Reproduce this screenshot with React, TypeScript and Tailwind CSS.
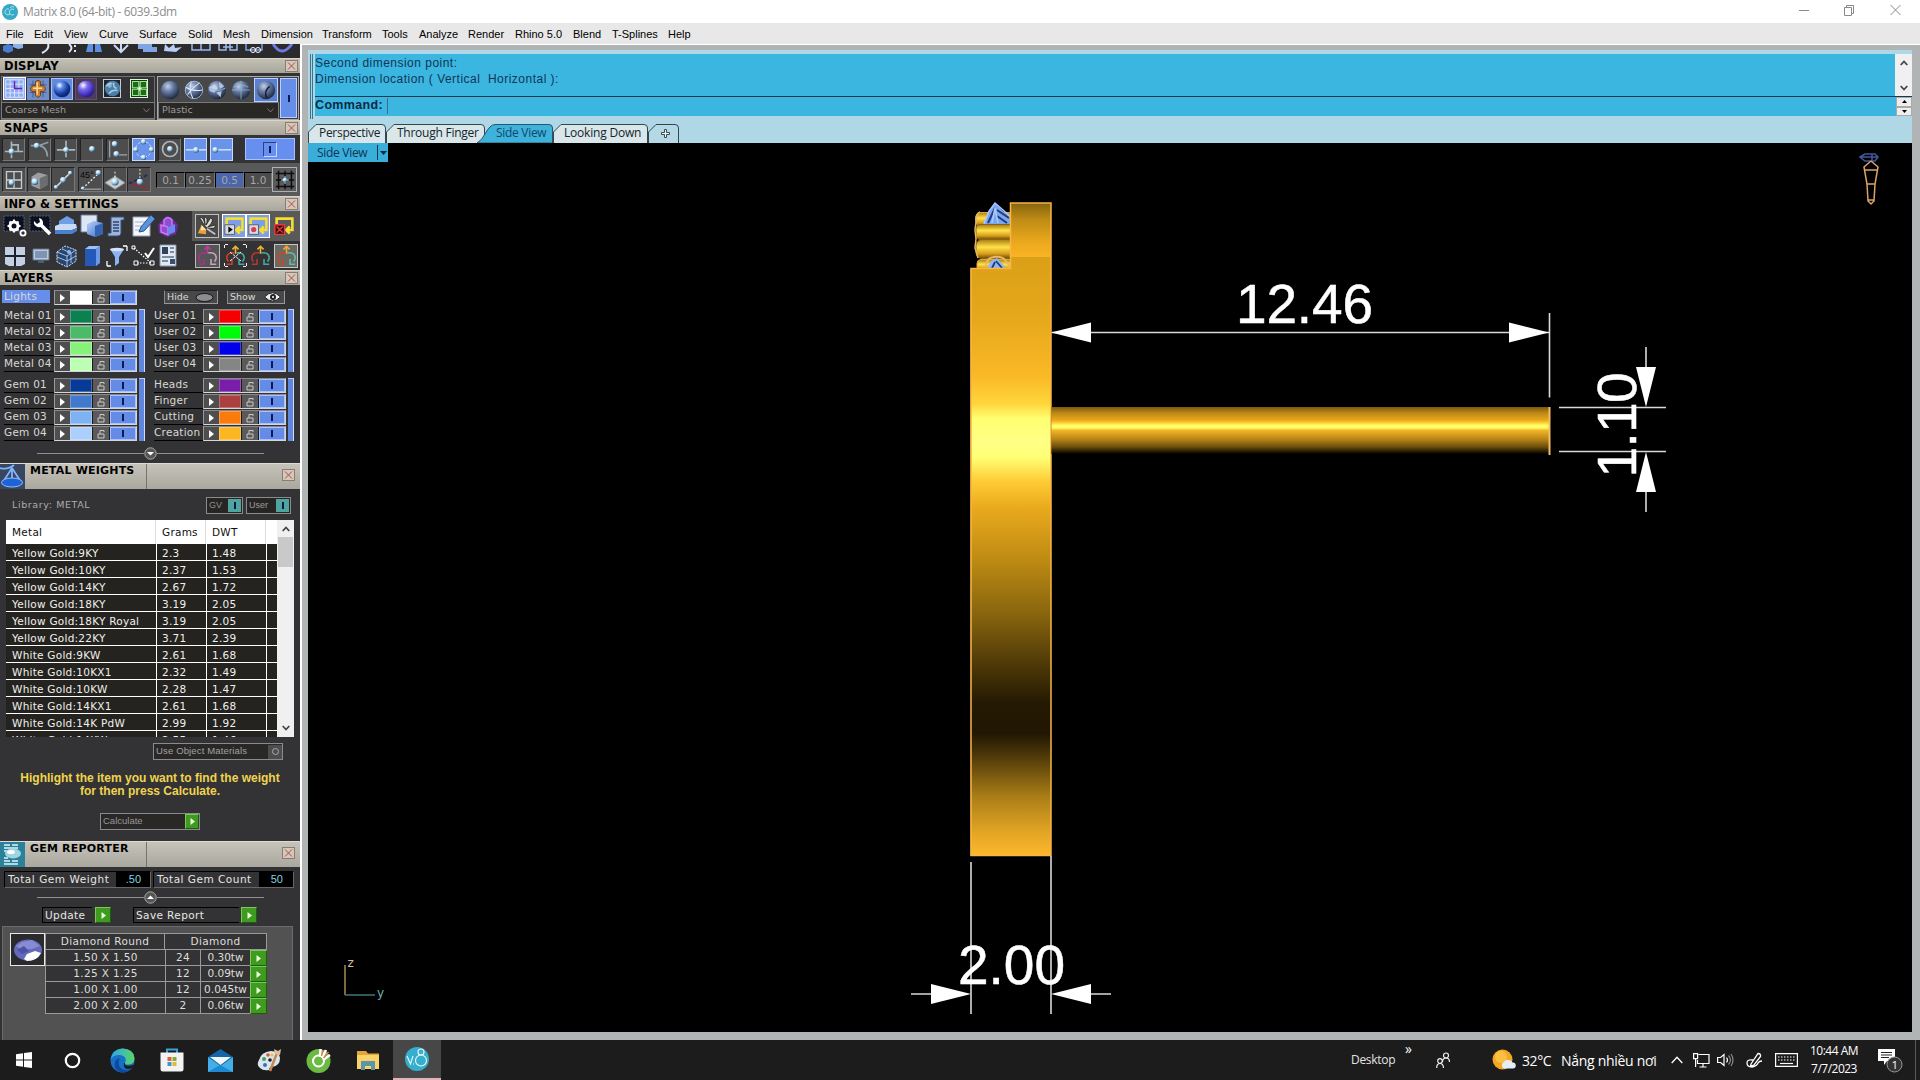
import React from "react";

const VERDANA = "font-['DejaVu_Sans',sans-serif]";
const ARIAL = "font-['Liberation_Sans',sans-serif]";
const SEGOE = "font-['Open_Sans',sans-serif]";

const menuItems = [
  { label: "File", width: "w-[28px]" },
  { label: "Edit", width: "w-[30px]" },
  { label: "View", width: "w-[35px]" },
  { label: "Curve", width: "w-[40px]" },
  { label: "Surface", width: "w-[49px]" },
  { label: "Solid", width: "w-[35px]" },
  { label: "Mesh", width: "w-[38px]" },
  { label: "Dimension", width: "w-[61px]" },
  { label: "Transform", width: "w-[60px]" },
  { label: "Tools", width: "w-[37px]" },
  { label: "Analyze", width: "w-[49px]" },
  { label: "Render", width: "w-[47px]" },
  { label: "Rhino 5.0", width: "w-[58px]" },
  { label: "Blend", width: "w-[39px]" },
  { label: "T-Splines", width: "w-[56px]" },
  { label: "Help", width: "w-[30px]" },
];

const metalLayers = [
  { name: "Metal 01", color: "bg-[#0b8050]" },
  { name: "Metal 02", color: "bg-[#4cba68]" },
  { name: "Metal 03", color: "bg-[#86f27a]" },
  { name: "Metal 04", color: "bg-[#bcffb4]" },
];
const userLayers = [
  { name: "User 01", color: "bg-[#f50000]" },
  { name: "User 02", color: "bg-[#00fb0a]" },
  { name: "User 03", color: "bg-[#0000ea]" },
  { name: "User 04", color: "bg-[#858585]" },
];
const gemLayers = [
  { name: "Gem 01", color: "bg-[#073a96]" },
  { name: "Gem 02", color: "bg-[#4379cd]" },
  { name: "Gem 03", color: "bg-[#7fb2f3]" },
  { name: "Gem 04", color: "bg-[#adcffd]" },
];
const partLayers = [
  { name: "Heads", color: "bg-[#791ea8]" },
  { name: "Finger", color: "bg-[#aa4140]" },
  { name: "Cutting", color: "bg-[#fb7a0c]" },
  { name: "Creation", color: "bg-[#fbb622]" },
];

const metals = [
  ["Yellow Gold:9KY", "2.3", "1.48"],
  ["Yellow Gold:10KY", "2.37", "1.53"],
  ["Yellow Gold:14KY", "2.67", "1.72"],
  ["Yellow Gold:18KY", "3.19", "2.05"],
  ["Yellow Gold:18KY Royal", "3.19", "2.05"],
  ["Yellow Gold:22KY", "3.71", "2.39"],
  ["White Gold:9KW", "2.61", "1.68"],
  ["White Gold:10KX1", "2.32", "1.49"],
  ["White Gold:10KW", "2.28", "1.47"],
  ["White Gold:14KX1", "2.61", "1.68"],
  ["White Gold:14K PdW", "2.99", "1.92"],
  ["White Gold:14KW", "2.55", "1.46"],
];

const gems = [
  ["1.50 X 1.50", "24", "0.30tw"],
  ["1.25 X 1.25", "12", "0.09tw"],
  ["1.00 X 1.00", "12", "0.045tw"],
  ["2.00 X 2.00", "2", "0.06tw"],
];

type IconProps = { children: React.ReactNode; className?: string; size?: number };

const Icon = ({ children, className = "", size = 24 }: IconProps) => (
  <svg width={size} height={size} viewBox="0 0 24 24" fill="none" className={`shrink-0 ${className}`}>
    {children}
  </svg>
);

const Gradients = () => (
  <svg width="0" height="0" className="absolute">
    <defs>
      <radialGradient id="blueBall" cx="35%" cy="28%" r="75%">
        <stop offset="0" stopColor="#ffffff" />
        <stop offset=".28" stopColor="#5c8be8" />
        <stop offset=".7" stopColor="#153a9c" />
        <stop offset="1" stopColor="#0a1e5c" />
      </radialGradient>
      <radialGradient id="violetBall" cx="33%" cy="28%" r="75%">
        <stop offset="0" stopColor="#ffffff" />
        <stop offset=".35" stopColor="#7a6af0" />
        <stop offset="1" stopColor="#26149a" />
      </radialGradient>
      <radialGradient id="steelBall" cx="38%" cy="30%" r="72%">
        <stop offset="0" stopColor="#c3d0ea" />
        <stop offset=".4" stopColor="#6b7fa8" />
        <stop offset="1" stopColor="#1c273f" />
      </radialGradient>
      <radialGradient id="dot" cx="35%" cy="30%" r="75%">
        <stop offset="0" stopColor="#ffffff" />
        <stop offset=".5" stopColor="#a8d4f0" />
        <stop offset="1" stopColor="#27506f" />
      </radialGradient>
      <linearGradient id="blueFace" x1="0" y1="0" x2="1" y2="1">
        <stop offset="0" stopColor="#b8d2ff" />
        <stop offset="1" stopColor="#3b6bbd" />
      </linearGradient>
    </defs>
  </svg>
);

const Dot = ({ x, y, r = 2.6 }: { x: number; y: number; r?: number }) => (
  <circle cx={x} cy={y} r={r} fill="url(#dot)" />
);

const CloseBox = () => (
  <div className="flex h-3 w-[13px] items-center justify-center border border-[#8b7c72] bg-[#d2c8bc]">
    <svg width="9" height="8" viewBox="0 0 9 8" stroke="#b04a42" strokeWidth="1">
      <path d="M1 .5l7 7M8 .5l-7 7" />
    </svg>
  </div>
);

const PanelHeader = ({ title }: { title: string }) => (
  <div className="flex h-[15px] shrink-0 items-center justify-between border-t border-[#d8d4c8] bg-linear-to-b from-[#c3bfb3] to-[#a9a69c] pr-[2px] pl-[4px]">
    <span className={`${VERDANA} text-[11.5px] leading-[14px] font-bold tracking-[0.1px] text-black`}>{title}</span>
    <CloseBox />
  </div>
);

const ReportHeader = ({ title, icon }: { title: string; icon: React.ReactNode }) => (
  <div className="flex h-[26px] shrink-0 border-t border-[#dedbd2] bg-linear-to-b from-[#c6c3ba] to-[#aaa79e]">
    {icon}
    <div className={`${VERDANA} w-[122px] border-r border-[#77746c] pl-[5px] text-[11px] leading-[13px] font-bold tracking-[0.2px] whitespace-nowrap text-black`}>
      {title}
    </div>
    <div className="flex flex-1 items-center justify-end pr-[5px] pb-[3px]">
      <CloseBox />
    </div>
  </div>
);

const ToggleMark = () => <span className="h-[7px] w-[2px] bg-[#0c1a52]" />;

type BtnProps = { children: React.ReactNode; active?: boolean; className?: string };

const SnapButton = ({ children, active = false, className = "" }: BtnProps) => (
  <div
    className={`flex h-[23px] w-[23px] shrink-0 items-center justify-center border ${
      active ? "border-[#c5d8ff] bg-[#6a93ea]" : "border-t-[#222] border-r-[#777] border-b-[#777] border-l-[#222] bg-[#4d4d4d]"
    } ${className}`}
  >
    {children}
  </div>
);

/* top strip, scrolled so only the lower part of the icons shows */
const ToolStrip = () => (
  <div className="flex h-[14px] shrink-0 items-start overflow-hidden bg-[#2b2b2d] pl-[1px]">
    <svg width="296" height="10" viewBox="0 0 296 10" fill="none">
      <path d="M2 2l5-2 5 2v5l-5 2-5-2z" fill="#4a7cd0" />
      <path d="M12 0h10v4l-5 1-5-2z" fill="#8eb0e8" />
      <path d="M47 0q2 5-6 9" stroke="#dfe6f5" strokeWidth="2" />
      <path d="M68 0q5 4 0 8M74 1v2M74 6v2" stroke="#dfe6f5" strokeWidth="2" />
      <path d="M85 8l2-8h5v8zM94 0h5l2 8h-7z" fill="#5f8fe0" />
      <path d="M120 0v7M113 1l7 7 7-7" stroke="#c9d8f5" strokeWidth="2" />
      <path d="M137 0h14v3h5v5h-14v-3h-5z" fill="#7fa4e4" />
      <path d="M163 7l1-7 4 4 5-4 1 4 7-1-6 5z" fill="#b8cdf2" />
      <path d="M191 0v6h18v-6M200 0v6" stroke="#9ab7ee" strokeWidth="1.5" />
      <path d="M218 0v6h7v-6M229 0v6h7v-6M222 3h10" stroke="#9ab7ee" strokeWidth="1.5" />
      <path d="M245 0v6h16v-6" stroke="#7f9fdc" strokeWidth="1.5" />
      <circle cx="252" cy="6" r="2.5" stroke="#fff" />
      <circle cx="257" cy="6" r="2.5" stroke="#fff" />
      <path d="M272 0q9 14 19 0" stroke="#6f78e0" strokeWidth="3" />
    </svg>
  </div>
);

const Combo = ({ label, className }: { label: string; className: string }) => (
  <div className={`flex h-[17px] items-center justify-between border border-[#77797a] bg-[#2a2825] pr-[4px] pl-[3px] ${className}`}>
    <span className={`${VERDANA} text-[9.5px] text-[#9d9d9d]`}>{label}</span>
    <svg width="7" height="5" viewBox="0 0 7 5" fill="none" stroke="#77797a">
      <path d="M.5.5l3 3.5 3-3.5" />
    </svg>
  </div>
);

const Ball = ({ kind = 0 }: { kind?: number }) => (
  <Icon size={22}>
    <circle cx="12" cy="12" r="10" fill="url(#steelBall)" />
    {kind === 1 && <path d="M3 9q8 5 18 3M9 2.500q-3 10 2 19M18 4q-8 6-13 13" stroke="#dfe9fb" strokeWidth="1.100" />}
    {kind === 1 && <circle cx="12" cy="12" r="9.500" stroke="#aebbd3" />}
    {kind === 2 && (
      <>
        <path d="M3 9l6-3 4 4-4 5-5-2zM14 3l6 5-5 3zM11 15l6-2-1 7z" fill="#c9dcf4" opacity=".8" />
        <path d="M3 10q9 5 18 0" stroke="#9db2d2" />
      </>
    )}
    {kind === 3 && <path d="M2 12h20M12 2v20M4 9q8-5 16 0" stroke="#8cb4c4" strokeWidth="1.100" opacity=".8" />}
    {kind === 4 && <path d="M13 21q-4-8 3-13" stroke="#101a30" strokeWidth="1.500" />}
  </Icon>
);

const DisplayPanel = () => (
  <div className="flex h-[47px] shrink-0 justify-between bg-[#333335] px-[1px] pt-[3px]">
    <div className="flex w-[154px] flex-col border border-[#6f7072]">
      <div className="flex h-[25px] items-center pb-[2px]">
        <div className="ml-[1px] flex h-[23px] w-[23px] items-center justify-center border border-white bg-[#8eabf3]">
          <Icon size={21}>
            <path d="M2 2h20v20H2zM2 7h20M2 12h20M2 17h20M7 2v20M12 2v20M17 2v20" stroke="#e4eafc" />
            <path d="M12 3v9h9" stroke="#6a1fae" strokeWidth="1.600" />
          </Icon>
        </div>
        <div className="ml-[1px] flex h-[22px] w-[22px] items-center justify-center bg-[#6f8ecb]">
          <Icon size={20}>
            <path d="M2 7h20M2 16h20M6 2v20M18 2v20" stroke="#394f85" />
            <path d="M9 3q3-3 6 0v5q5-1 6 4-1 4-6 3v5q-3 4-6 0v-5q-5 1-6-3 1-5 6-4z" fill="#c9802f" stroke="#6a3506" />
            <path d="M11 4v15M6 11h11" stroke="#ffd79a" strokeWidth="1.800" />
          </Icon>
        </div>
        <div className="ml-[2px] flex h-[22px] w-[22px] items-center justify-center border border-[#a9c2ff] bg-[#6389dd]">
          <Icon size={20}><circle cx="12" cy="12" r="10" fill="url(#blueBall)" /></Icon>
        </div>
        <div className="ml-[2px] flex h-[22px] w-[22px] items-center justify-center border border-[#6b4a7b] bg-[#4a3d55]">
          <Icon size={20}><circle cx="12" cy="12" r="10" fill="url(#violetBall)" /></Icon>
        </div>
        <div className="ml-[6px] flex h-[19px] w-[18px] items-center justify-center border border-[#c9cbcd] bg-[#1a2633]">
          <Icon size={17}>
            <circle cx="12" cy="12" r="11" fill="#4d7ea6" />
            <path d="M3 9q4-6 9-4M7 19q5-6 12-4M14 4q-2 6 4 8" stroke="#a3cbe6" strokeWidth="2" />
            <circle cx="8" cy="8" r="3" fill="#b9d9ee" opacity=".6" />
          </Icon>
        </div>
        <div className="ml-[9px] flex h-[19px] w-[18px] items-center justify-center border border-[#dff0dc] bg-[#123912]">
          <Icon size={17}>
            <path d="M2 2h9v9H2zM13 2h9v9h-9zM2 13h9v9H2zM13 13h9v9h-9z" fill="#1d6a1c" stroke="#9fe892" strokeWidth="1.500" />
            <path d="M9 12h6M12 9v6" stroke="#dfffd8" strokeWidth="1.500" />
          </Icon>
        </div>
      </div>
      <Combo label="Coarse Mesh" className="-mx-px w-[154px]" />
    </div>
    <div className="flex w-[142px] border border-[#a8a9aa] bg-[#3b3b3d]">
      <div className="flex w-[121px] flex-col">
        <div className="flex h-[25px] items-center justify-around bg-[#47484a]">
          <Ball />
          <Ball kind={1} />
          <Ball kind={2} />
          <Ball kind={3} />
          <div className="border border-[#bcd0ff] bg-[#5b80d0]"><Ball kind={4} /></div>
        </div>
        <Combo label="Plastic" className="w-[121px]" />
      </div>
      <div className="m-px flex flex-1 items-center justify-center border border-[#b9ceff] bg-[#668ee8]">
        <ToggleMark />
      </div>
    </div>
  </div>
);

const SnapsPanel = () => (
  <div className="flex h-[61px] shrink-0 flex-col bg-[#333335]">
    <div className="flex h-[28px] items-center gap-[3px] pl-[2px]">
      <SnapButton>
        <Icon size={20}><path d="M1 15h22M9 3v20M9 7h8v8" stroke="#a9b6bf" strokeWidth="2" /><Dot x={9} y={15} r={3.500} /></Icon>
      </SnapButton>
      <SnapButton>
        <Icon size={20}><path d="M1 8h10q9 1 10 13M10 8l12-4" stroke="#8fa0aa" strokeWidth="2" /><Dot x={8} y={8} r={3.500} /></Icon>
      </SnapButton>
      <SnapButton>
        <Icon size={20}><path d="M1 13h22M12 2v20" stroke="#a9b6bf" strokeWidth="2" /><Dot x={12} y={13} r={3.500} /></Icon>
      </SnapButton>
      <SnapButton><Icon size={20}><Dot x={12} y={12} r={3.500} /></Icon></SnapButton>
      <SnapButton>
        <Icon size={20}><path d="M2 2v20M7 19h16" stroke="#9aa7b0" strokeWidth="1.500" /><Dot x={8} y={6} r={3.500} /><Dot x={10} y={18} r={3.500} /></Icon>
      </SnapButton>
      <SnapButton active>
        <Icon size={21}>
          <circle cx="12" cy="12" r="9" stroke="#dfe9ff" strokeDasharray="3 2" />
          <Dot x={12} y={3} r={3} /><Dot x={21} y={12} r={3} /><Dot x={12} y={21} r={3} /><Dot x={3} y={12} r={3} />
        </Icon>
      </SnapButton>
      <SnapButton>
        <Icon size={20}><circle cx="12" cy="12" r="9" stroke="#aeb6bb" strokeWidth="2" /><Dot x={12} y={12} r={3.500} /></Icon>
      </SnapButton>
      <SnapButton active><Icon size={20}><path d="M0 13h24" stroke="#e3edff" strokeWidth="1.500" /><Dot x={12} y={13} r={3.500} /></Icon></SnapButton>
      <SnapButton active><Icon size={20}><path d="M3 13h20" stroke="#e3edff" strokeWidth="1.500" /><Dot x={4} y={13} r={3.500} /></Icon></SnapButton>
      <div className="ml-[9px] flex h-[22px] w-[50px] items-center justify-center border border-[#a6c0ff] bg-[#668ff0]">
        <div className="flex h-[15px] w-[14px] items-center justify-center border border-t-[#2c4280] border-r-[#c6d7ff] border-b-[#c6d7ff] border-l-[#2c4280]">
          <ToggleMark />
        </div>
      </div>
    </div>
    <div className="flex h-[33px] items-center bg-[#58595a] pl-[2px]">
      <SnapButton className="mr-px h-[25px] w-[24px] border-[#8b8c8d]">
        <Icon size={20}><path d="M3 2h18v20H3zM12 2v20M3 12h18" stroke="#c5ccd0" strokeWidth="1.600" /><Dot x={9} y={15} r={3.500} /></Icon>
      </SnapButton>
      <SnapButton className="h-[25px] w-[24px] border-[#8b8c8d]">
        <Icon size={20}><path d="M3 8l8-5 11 3v12l-9 5-10-4z" fill="#9b9d9f" /><path d="M13 10l9-4v12l-9 5z" fill="#6b6d6f" /><Dot x={7} y={14} r={4} /></Icon>
      </SnapButton>
      <SnapButton className="h-[25px] w-[24px] border-[#8b8c8d]">
        <Icon size={20}><path d="M3 21L21 3" stroke="#d4dade" strokeWidth="2" /><Dot x={3.500} y={20.500} r={2.500} /><Dot x={12} y={12} r={3.500} /><Dot x={20.500} y={3.500} r={2.500} /></Icon>
      </SnapButton>
      <SnapButton className="ml-[3px] h-[25px] w-[25px] border-[#8b8c8d]">
        <Icon size={22}>
          <text x="0" y="10" fontSize="10" fill="#0a0a0a" fontFamily="Liberation Sans">45°</text>
          <path d="M3 21L20 5" stroke="#e9eef2" strokeDasharray="2 2" strokeWidth="1.500" /><path d="M3 22h20" stroke="#bfc6ca" /><Dot x={20} y={4} r={3} /><Dot x={3} y={21} r={2} />
        </Icon>
      </SnapButton>
      <SnapButton className="h-[25px] w-[24px] border-[#8b8c8d]">
        <Icon size={22}><path d="M1 15l11-7 11 7-11 7z" fill="#c9cdcf" stroke="#8e9294" /><path d="M12 3v10" stroke="#fff" strokeDasharray="2 2" /><Dot x={12} y={14} r={4} /></Icon>
      </SnapButton>
      <SnapButton className="h-[25px] w-[24px] border-[#8b8c8d]">
        <Icon size={22}><path d="M1 15l22 7" stroke="#9c2b34" strokeWidth="2" strokeDasharray="5 1" /><path d="M1 16L22 6" stroke="#222c5e" strokeWidth="2" strokeDasharray="4 2" /><path d="M13 0v14" stroke="#fff" strokeDasharray="2 2" /><Dot x={13} y={14} r={3.500} /></Icon>
      </SnapButton>
      <div className={`${VERDANA} ml-[5px] flex h-[16px] w-[116px] text-[10.5px] leading-[15px] text-[#a5a6a7]`}>
        <span className="w-[29px] border border-t-black border-r-[#777] border-b-[#777] border-l-black bg-[#4c4c4d] text-center">0.1</span>
        <span className="w-[30px] border border-t-black border-r-[#777] border-b-[#777] border-l-black bg-[#4c4c4d] text-center">0.25</span>
        <span className="w-[29px] border border-t-black border-r-[#777] border-b-[#777] border-l-black bg-[#4a67ad] text-center">0.5</span>
        <span className="w-[28px] border border-t-black border-r-[#777] border-b-[#777] border-l-black bg-[#4c4c4d] text-center">1.0</span>
      </div>
      <div className="flex h-[25px] w-[25px] shrink-0 items-center justify-center border border-[#b0b1b2] bg-[#5a5a5b]">
        <Icon size={22}><path d="M5 2v20M12 2v20M19 2v20M2 5h20M2 12h20M2 19h20" stroke="#0c0c0c" strokeWidth="1.600" /><path d="M8 12h8M12 8v8" stroke="#9fc6da" strokeWidth="1.500" /><Dot x={12} y={12} r={2.500} /></Icon>
      </div>
    </div>
  </div>
);

const OrbitIcon = ({ a, b, c }: { a: string; b: string; c: string }) => (
  <Icon size={21}>
    <path d="M12 10V2M8.500 5L12 1.500 15.500 5" stroke={a} strokeWidth="1.800" />
    <path d="M11 9q-8-1-9 5 0 3 2 5M2 22h6v-6" stroke={b} strokeWidth="1.800" />
    <path d="M13 9q8-1 9 5 0 3-2 5M22 22h-6v-6" stroke={c} strokeWidth="1.800" />
  </Icon>
);

const LoopIcon = ({ mark }: { mark: React.ReactNode }) => (
  <Icon size={21}>
    <path d="M3 10V3h18v13h-6M18 12l-4 4 4 4" stroke="#f4dd35" strokeWidth="3" />
    <path d="M1 10h11v11H1z" fill="#d5dbe6" stroke="#555" />
    {mark}
  </Icon>
);

const InfoPanel = () => (
  <div className="flex h-[59px] shrink-0 flex-col bg-[#333335]">
    <div className="flex h-[30px] items-center">
      <div className="flex w-[192px] items-center gap-[1.5px] pl-[3px]">
        <Icon>
          <path d="M1 2h20v15H1z" fill="#0b1020" stroke="#4f617c" strokeDasharray="2 1" />
          <circle cx="11" cy="12" r="4" stroke="#fff" strokeWidth="3" />
          <path d="M11 5.500v2.500M11 16v2.500M4.500 12H7M15 12h2.500M6.500 7.500l2 2M13.500 14.500l2 2M15.500 7.500l-2 2M8.500 14.500l-2 2" stroke="#fff" strokeWidth="2" />
          <circle cx="20" cy="19" r="2.600" stroke="#fff" strokeWidth="1.800" />
        </Icon>
        <Icon>
          <path d="M1 2h20v15H1z" fill="#0b1020" stroke="#4f617c" strokeDasharray="2 1" />
          <path d="M12 11l9 9" stroke="#fff" strokeWidth="3.600" />
          <path d="M5 7a5 5 0 0 0 8 5 5 5 0 0 0-3-8l1 4-3 2z" fill="#fff" />
        </Icon>
        <Icon>
          <path d="M5 7l8-5 7 4v8l-8 3-7-3z" fill="#6fa0e6" />
          <path d="M1 12l5-2h16l1 4-5 2H1z" fill="#c8dcfa" />
          <path d="M1 16h17l5-2v3l-5 3H1z" fill="#4d7fcb" />
        </Icon>
        <Icon>
          <path d="M1 1h16v17H1z" fill="#dde7f4" stroke="#6a7f9e" />
          <path d="M7 10l7-3 9 2v11l-8 3-8-3z" fill="url(#blueFace)" />
          <path d="M15 12l8-3v11l-8 3z" fill="#3564b5" />
        </Icon>
        <Icon>
          <path d="M6 3h13v3h-3v13q0 3-3 3H3v-3h3z" fill="#9fb5da" stroke="#35507e" />
          <path d="M8 8h6M8 11h6M8 14h6M8 17h6" stroke="#2c4475" strokeWidth="1.500" />
        </Icon>
        <Icon>
          <path d="M2 3h17v19H2z" fill="#f4f7fb" stroke="#93a4ba" />
          <path d="M4 8h12M4 12h12M4 16h10" stroke="#a3b0c2" />
          <path d="M8 18l2-5L20 1l4 4-11 12z" fill="#5b93df" stroke="#274f8d" />
        </Icon>
        <Icon>
          <path d="M2 11l8-9 6 2 6 7-2 9-9 3-8-4z" fill="#6c2c9e" />
          <path d="M8 12V6q4-5 8 0v6M5 11l7 2v8l-7-3z" stroke="#cf7df0" strokeWidth="1.400" fill="#8f4ed0" />
          <path d="M12 13l7-3v8l-7 3z" fill="#6a8af0" />
        </Icon>
      </div>
      <div className="flex h-full flex-1 items-center bg-[#59595a] pl-[3px]">
        <div className="flex h-[24px] w-[24px] items-center justify-center border border-[#c0c0c0] bg-[#4a4a4a]">
          <Icon size={22}>
            <path d="M9 11L4 3q4-2 6 8l-1-9q5 1 2 9l5-8q5 3-3 10l8-2q1 5-9 3z" fill="#dcdcd2" stroke="#181818" strokeWidth=".8" />
            <path d="M2 20l4-9 5 5v5z" fill="#e8a03a" />
            <path d="M6 11l5 5-6 1z" fill="#ffe0a0" />
            <path d="M12 15l9 6" stroke="#c5c5c5" strokeWidth="1.800" />
          </Icon>
        </div>
        <div className="ml-[3px] flex h-[24px] w-[24px] items-center justify-center border border-white bg-[#7d9fe8]">
          <LoopIcon mark={<path d="M5 12v7l5-3.500z" fill="#000" />} />
        </div>
        <div className="flex h-[24px] w-[24px] items-center justify-center border border-white bg-[#7d9fe8]">
          <LoopIcon mark={<circle cx="6.500" cy="15.500" r="3" fill="#e03a4d" />} />
        </div>
        <div className="ml-[4px]">
          <LoopIcon mark={<path d="M1 10h11v11H1zM3 12l7 7M10 12l-7 7" fill="#3a0a0b" stroke="#e93b3b" strokeWidth="1.600" />} />
        </div>
      </div>
    </div>
    <div className="flex h-[29px] items-center">
      <div className="flex w-[192px] items-center gap-[1.5px] pl-[3px]">
        <Icon>
          <path d="M2 3h20v17l-4 2H6l-4-2z" fill="#c4d0e2" />
          <path d="M12 3v19M2 12h20" stroke="#1b212c" strokeWidth="2" />
        </Icon>
        <Icon>
          <path d="M4 5h16v11H4z" fill="#bac8dc" stroke="#63748c" />
          <path d="M6 7h12v7H6z" fill="#7f93b2" />
          <path d="M9 16h6v3H9z" fill="#4e5d73" />
        </Icon>
        <Icon>
          <path d="M3 8l8-6 11 4v11l-9 6-10-5z" fill="#26466f" stroke="#dbe8fb" strokeDasharray="2 1" />
          <path d="M3 8l10 4 9-6M13 12v11M8 5l9 4v10M3 13l10 4 9-5" stroke="#b5cbee" strokeWidth=".9" />
          <circle cx="15" cy="8" r="2" fill="#8fb8f0" />
        </Icon>
        <Icon>
          <path d="M5 5l4-3h11v17l-4 3H5z" fill="#2459b8" />
          <path d="M5 5l4-3h11l-4 3z" fill="#9fc0f5" />
          <path d="M16 5l4-3v17l-4 3z" fill="#6c98e8" />
        </Icon>
        <Icon>
          <path d="M2 22v-5M2 22h4M22 2v5M22 2h-4" stroke="#fff" strokeWidth="1.300" />
          <path d="M5 5h14l-5 8v6l-4 3v-9z" fill="#8ab4f2" />
          <ellipse cx="12" cy="5.500" rx="7" ry="1.800" fill="#d3e3fb" />
        </Icon>
        <Icon>
          <path d="M3 4l17 15M6 19h14" stroke="#fff" strokeDasharray="1.500 1.500" strokeWidth="1.200" />
          <path d="M1 2h3v3H1zM3 17h4v4H3zM19 17h4v4h-4z" stroke="#fff" />
          <path d="M14 9l3 4 6-9" stroke="#fff" strokeWidth="2" />
        </Icon>
        <Icon>
          <path d="M4 1h16v21H4z" fill="#e3e9f2" stroke="#8494ac" />
          <path d="M6 3h6v7H6z" fill="#2e415f" />
          <path d="M14 4h4M14 8h4M6 13h12M6 17h6" stroke="#5b6c86" strokeWidth="1.300" />
          <path d="M14 15h5v5h-5z" fill="#39506f" />
        </Icon>
      </div>
      <div className="flex flex-1 items-center pl-[3px]">
        <div className="flex h-[24px] w-[25px] items-center justify-center border border-[#b9b9b9] bg-[#555]">
          <OrbitIcon a="#c03a9c" b="#a93287" c="#c7a2be" />
        </div>
        <div className="relative ml-[4px] flex h-[23px] w-[23px] items-center justify-center">
          <OrbitIcon a="#f0b52e" b="#cf3b2b" c="#4aa79b" />
          <svg width="23" height="23" viewBox="0 0 23 23" fill="none" stroke="#f0f0f0" className="absolute inset-0">
            <path d="M.5 4V.5H4M19 .5h3.500V4M22.500 19v3.500H19M4 22.500H.5V19M6 17l11-9M6 8l11 9" strokeDasharray="3 1" />
          </svg>
        </div>
        <div className="ml-[3px]"><OrbitIcon a="#f0b52e" b="#b9372b" c="#4aa79b" /></div>
        <div className="ml-[3px] flex h-[24px] w-[24px] items-center justify-center border border-[#c5c5c5] bg-[#6b6a62]">
          <OrbitIcon a="#f4a834" b="#d0442c" c="#57bdae" />
        </div>
      </div>
    </div>
  </div>
);

const LayerControls = ({ color }: { color: string }) => (
  <div className="flex h-[15px] w-[83px] border border-t-[#888] border-r-[#d6d6d6] border-b-[#d6d6d6] border-l-[#999] bg-[#1c1c1c]">
    <div className="flex w-[15px] items-center justify-center bg-[#4e4e4e]">
      <svg width="5" height="8" viewBox="0 0 5 8"><path d="M0 0l5 4-5 4z" fill="#fff" /></svg>
    </div>
    <div className={`mr-px w-[22px] border border-white/25 ${color}`} />
    <div className="mr-px flex w-[16px] items-center justify-center bg-[#5a5a5a]">
      <svg width="8" height="10" viewBox="0 0 8 10" fill="none" stroke="#c8c8c8">
        <path d="M1 5h6v4H1zM3 5V1.500h4V3" />
      </svg>
    </div>
    <div className="flex flex-1 items-center justify-center border border-[#a8c1ff] bg-[#648ce6]">
      <ToggleMark />
    </div>
  </div>
);

const LayerGroup = ({ layers, labelWidth }: { layers: { name: string; color: string }[]; labelWidth: string }) => (
  <div className="flex">
    <div className="flex flex-col gap-px">
      {layers.map((l) => (
        <div key={l.name} className="flex h-[15px]">
          <div className={`${VERDANA} ${labelWidth} border-b border-black text-[10.5px] leading-[12px] tracking-[0.25px] whitespace-nowrap text-[#d9d9d3]`}>
            {l.name}
          </div>
          <LayerControls color={l.color} />
        </div>
      ))}
    </div>
    <div className="ml-[2px] h-[63px] w-[6px] border-t border-r border-[#b3c9ff] border-r-[#cfdcff] bg-[#5f86dc]" />
  </div>
);

const Divider = ({ up = false }: { up?: boolean }) => (
  <div className="flex h-[13px] items-center justify-center">
    <div className="h-px w-[107px] bg-[#8f8f8f]" />
    <svg width="13" height="13" viewBox="0 0 13 13">
      <circle cx="6.500" cy="6.500" r="5.700" fill="#555" stroke="#aaa" />
      <path d={up ? "M3 8l3.500-3.500L10 8z" : "M3 5l3.500 3.500L10 5z"} fill="#fff" />
    </svg>
    <div className="h-px w-[107px] bg-[#8f8f8f]" />
  </div>
);

const LayersPanel = () => (
  <div className="flex h-[178px] shrink-0 flex-col bg-[#333335] pt-[5px]">
    <div className={`${VERDANA} flex h-[15px] pl-[2px] text-[10.5px] text-[#d9d9d3]`}>
      <div className="mr-[4px] h-[13px] w-[48px] bg-[#668eea] pl-[2px] leading-[12px] tracking-[0.25px]">Lights</div>
      <LayerControls color="bg-white" />
      <div className="ml-[27px] flex h-[14px] w-[54px] items-center justify-between border border-t-[#222] border-r-[#999] border-b-[#999] border-l-[#888] bg-[#47484a] pr-[3px] pl-[2px] text-[9.5px]">
        Hide
        <svg width="19" height="9" viewBox="0 0 19 9"><ellipse cx="9.500" cy="4.500" rx="8.500" ry="4" fill="#8d8d8d" stroke="#151515" /></svg>
      </div>
      <div className="ml-[9px] flex h-[14px] w-[58px] items-center justify-between border border-t-[#222] border-r-[#999] border-b-[#999] border-l-[#888] bg-[#47484a] pr-[3px] pl-[2px] text-[9.5px]">
        Show
        <svg width="17" height="10" viewBox="0 0 17 10">
          <path d="M.5 5q8-8.500 16 0-8 8-16 0z" fill="#eee" stroke="#222" />
          <circle cx="9" cy="5" r="3" fill="#222" /><circle cx="9" cy="5" r="1" fill="#fff" />
        </svg>
      </div>
    </div>
    <div className="mt-[4px] flex justify-between pr-[6px] pl-[4px]">
      <LayerGroup layers={metalLayers} labelWidth="w-[50px]" />
      <LayerGroup layers={userLayers} labelWidth="w-[49px]" />
    </div>
    <div className="mt-[6px] flex justify-between pr-[6px] pl-[4px]">
      <LayerGroup layers={gemLayers} labelWidth="w-[50px]" />
      <LayerGroup layers={partLayers} labelWidth="w-[49px]" />
    </div>
    <div className="mt-[6px]"><Divider /></div>
  </div>
);

const GreenArrow = ({ className = "h-[15px] w-[15px]" }: { className?: string }) => (
  <div className={`flex items-center justify-center border border-t-[#7cc95a] border-r-[#1e5c10] border-b-[#1e5c10] border-l-[#7cc95a] bg-[#3f9a20] ${className}`}>
    <svg width="5" height="7" viewBox="0 0 5 7"><path d="M.5 0L5 3.500.5 7z" fill="#e8ffd8" /></svg>
  </div>
);

const MetalWeights = () => (
  <>
    <ReportHeader
      title="METAL WEIGHTS"
      icon={
        <svg width="25" height="25" viewBox="0 0 25 25" className="bg-[#39465f]" fill="none">
          <path d="M0 4q8 2 14-3M12 4L3 18M12 4l9 14M12 4v12" stroke="#7fb5ff" strokeWidth="1.800" />
          <ellipse cx="12" cy="18.500" rx="10.500" ry="4.500" fill="#1d63d8" stroke="#8fc0ff" />
        </svg>
      }
    />
    <div className="flex h-[352px] shrink-0 flex-col bg-[#333335] pt-[8px]">
      <div className="flex h-[17px] items-center pr-[9px] pl-[12px]">
        <span className={`${VERDANA} flex-1 pb-px text-[9.5px] tracking-[0.6px] text-[#adadad]`}>Library: METAL</span>
        <div className={`${ARIAL} mr-[3px] flex h-[17px] w-[37px] items-center justify-between border border-[#8a8b8c] bg-[#272523] pr-px pl-[2px] text-[9px] text-[#8f8f8f]`}>
          GV<span className="flex h-[13px] w-[13px] items-center justify-center bg-[#4fa4a0]"><ToggleMark /></span>
        </div>
        <div className={`${ARIAL} flex h-[17px] w-[45px] items-center justify-between border border-[#8a8b8c] bg-[#272523] pr-px pl-[2px] text-[9px] text-[#9d9d9d]`}>
          User<span className="flex h-[13px] w-[13px] items-center justify-center bg-[#4fa4a0]"><ToggleMark /></span>
        </div>
      </div>
      <div className="mt-[6px] ml-[6px] flex h-[217px] w-[288px]">
        <div className={`${VERDANA} h-full w-[271px] overflow-hidden bg-[#24231f] text-[10.5px] tracking-[0.25px] text-[#f0f0ec]`}>
          <div className="flex h-[24px] bg-white leading-[24px] text-[#111]">
            <span className="w-[150px] border-r border-[#ddd] pl-[6px]">Metal</span>
            <span className="w-[50px] border-r border-[#ddd] pl-[6px]">Grams</span>
            <span className="w-[60px] border-r border-[#ddd] pl-[6px]">DWT</span>
          </div>
          {metals.map(([name, grams, dwt]) => (
            <div key={name} className="flex h-[17px] border-b border-white leading-[18px] whitespace-nowrap">
              <span className="w-[151px] border-r border-white pl-[6px]">{name}</span>
              <span className="w-[50px] border-r border-white pl-[5px]">{grams}</span>
              <span className="w-[60px] border-r border-white pl-[5px]">{dwt}</span>
            </div>
          ))}
        </div>
        <div className="flex w-[17px] flex-col items-center bg-[#f0f0f0] py-[6px]">
          <svg width="8" height="6" viewBox="0 0 8 6" fill="none" stroke="#444" strokeWidth="1.800"><path d="M.7 5L4 1.500 7.300 5" /></svg>
          <div className="mt-[5px] h-[30px] w-[15px] bg-[#c9c9c9]" />
          <svg width="8" height="6" viewBox="0 0 8 6" fill="none" stroke="#444" strokeWidth="1.800" className="mt-auto"><path d="M.7 1L4 4.500 7.300 1" /></svg>
        </div>
      </div>
      <div className={`${ARIAL} mt-[6px] ml-[153px] flex h-[17px] w-[130px] items-center justify-between border border-[#8a8b8c] bg-[#2a2826] pl-[2px] text-[9.5px] tracking-[0.15px] text-[#a2a2a2]`}>
        Use Object Materials
        <span className="flex h-[14px] w-[14px] items-center justify-center bg-[#4d4d4d]">
          <span className="h-[7px] w-[7px] rounded-full border border-[#aaa]" />
        </span>
      </div>
      <p className={`${ARIAL} mt-[12px] text-center text-[12px] leading-[13px] font-bold text-[#f0d34e]`}>
        Highlight the item you want to find the weight
        <br />
        for then press Calculate.
      </p>
      <div className={`${ARIAL} mt-[15px] ml-[100px] flex h-[17px] w-[100px] items-center justify-between border border-[#8a8b8c] bg-[#2a2826] pl-[2px] text-[9.5px] text-[#979797]`}>
        Calculate
        <GreenArrow className="h-[15px] w-[14px]" />
      </div>
    </div>
  </>
);

const GemReporter = () => (
  <>
    <ReportHeader
      title="GEM REPORTER"
      icon={
        <svg width="25" height="25" viewBox="0 0 25 25" className="bg-[#2a8199]" fill="none">
          <path d="M4 3h6M12 3h6M4 6h14M4 19h6M12 19h6M4 22h14M4 9h4M4 16h4" stroke="#e3f4fa" strokeWidth="1.500" />
          <ellipse cx="13" cy="11.500" rx="8" ry="5" fill="#9fd4e4" />
          <ellipse cx="11" cy="10" rx="4" ry="2" fill="#fff" />
        </svg>
      }
    />
    <div className="flex flex-1 flex-col bg-[#333335] pt-[4px]">
      <div className={`${VERDANA} flex h-[17px] justify-between pr-[6px] pl-[4px] text-[10.5px] leading-[15px] text-[#e6e6e2]`}>
        <div className="flex w-[147px] border border-[#666] border-t-black border-l-black">
          <span className="w-[111px] pl-[3px] tracking-[0.55px] whitespace-nowrap">Total Gem Weight</span>
          <span className={`${ARIAL} flex-1 bg-black pr-[9px] text-right text-[11px] text-[#7fd2e0]`}>.50</span>
        </div>
        <div className="flex w-[141px] border border-[#666] border-t-black border-l-black">
          <span className="w-[105px] pl-[3px] tracking-[0.5px] whitespace-nowrap">Total Gem Count</span>
          <span className={`${ARIAL} flex-1 bg-black pr-[10px] text-right text-[11px] text-[#7fd2e0]`}>50</span>
        </div>
      </div>
      <div className="mt-[3px]"><Divider up /></div>
      <div className={`${VERDANA} mt-[3px] flex h-[16px] pl-[42px] text-[10.5px] leading-[15px] tracking-[0.4px] text-[#e6e6e2]`}>
        <span className="mr-[3px] w-[50px] border-y border-l border-black pl-[2px]">Update</span>
        <GreenArrow className="h-[16px] w-[16px]" />
        <span className="mr-[2px] ml-[22px] w-[106px] border-y border-l border-black pl-[2px]">Save Report</span>
        <GreenArrow className="h-[16px] w-[16px]" />
      </div>
      <div className="mt-[3px] mr-[7px] ml-[2px] flex flex-1 items-start border border-[#6a6a6a] border-b-0 bg-[#525252] pt-[6px] pl-[7px]">
        <div className="flex h-[33px] w-[35px] items-center justify-center border border-[#e8e8e8] bg-[#2b2b2d]">
          <svg width="30" height="24" viewBox="0 0 30 24">
            <ellipse cx="15" cy="12" rx="14" ry="10.500" fill="#6469bb" />
            <path d="M3 8l6-4 10-2 8 6-8 3-10 1z" fill="#868cd4" />
            <path d="M11 21l3-5 8-3 6 2q-4 8-14 8z" fill="#fff" />
            <path d="M4 12l7-4 5 5-7 3z" fill="#4d53a4" />
          </svg>
        </div>
        <div className={`${VERDANA} w-[222px] border-t border-[#9a9a9a] text-center text-[10.5px] leading-[15px] tracking-[0.35px] text-[#dededa]`}>
          <div className="flex h-[16px] border-x border-b border-[#9a9a9a] bg-[#333335]">
            <span className="w-[119px] border-r border-[#9a9a9a]">Diamond Round</span>
            <span className="flex-1">Diamond</span>
          </div>
          {gems.map(([size, count, weight]) => (
            <div key={size} className="flex h-[16px] border-b border-[#9a9a9a] bg-[#333335]">
              <span className="w-[121px] border-x border-[#9a9a9a]">{size}</span>
              <span className="w-[35px] border-r border-[#9a9a9a]">{count}</span>
              <span className="w-[49px] tracking-[0px] whitespace-nowrap">{weight}</span>
              <GreenArrow className="h-[16px] w-[17px]" />
            </div>
          ))}
        </div>
      </div>
    </div>
  </>
);

const Sidebar = () => (
  <aside className="flex w-[300px] flex-col bg-[#333335]">
    <ToolStrip />
    <PanelHeader title="DISPLAY" />
    <DisplayPanel />
    <PanelHeader title="SNAPS" />
    <SnapsPanel />
    <PanelHeader title="INFO & SETTINGS" />
    <InfoPanel />
    <PanelHeader title="LAYERS" />
    <LayersPanel />
    <MetalWeights />
    <GemReporter />
  </aside>
);

type TabProps = { label: string; width: number; box: string; fill: string; text: string; slant?: number };

const ViewTab = ({ label, width, box, fill, text, slant = 8 }: TabProps) => (
  <div className={`relative h-[19px] shrink-0 ${box}`}>
    <svg width={width} height="19" viewBox={`0 0 ${width} 19`} className="absolute inset-0">
      <path
        d={`M.5 19V${slant}L${slant} .5H${width - 4}Q${width - 0.5} .5 ${width - 0.5} 4V19`}
        fill={fill}
        stroke="#33464e"
      />
    </svg>
    <span className={`relative block leading-[17px] whitespace-nowrap ${text}`}>{label}</span>
  </div>
);

const CommandArea = () => (
  <div className="flex h-[65px] shrink-0 pl-[2px]">
    <div className="mr-[2px] w-[3px] border-x border-[#3b7488]" />
    <div className="flex flex-1 flex-col">
      <div className="flex h-[43px] border-b border-[#123c52] bg-[#3ab6e1]">
        <div className={`${ARIAL} flex-1 pt-px text-[12px] leading-[16px] tracking-[0.48px] whitespace-pre text-[#143454]`}>
          <div>Second dimension point:</div>
          <div>{"Dimension location ( Vertical  Horizontal ):"}</div>
        </div>
        <div className="flex w-[17px] flex-col items-center justify-between bg-[#f0f0f0] pt-[6px] pb-[5px]">
          <svg width="8" height="6" viewBox="0 0 8 6" fill="none" stroke="#444" strokeWidth="1.800"><path d="M.7 5L4 1.500 7.300 5" /></svg>
          <svg width="8" height="6" viewBox="0 0 8 6" fill="none" stroke="#444" strokeWidth="1.800"><path d="M.7 1L4 4.500 7.300 1" /></svg>
        </div>
      </div>
      <div className="flex h-[19px] bg-[#3ab6e1]">
        <div className={`${ARIAL} flex flex-1 items-center pb-[2px] text-[12.5px] font-bold tracking-[0.35px] text-[#0d2a44]`}>
          Command:
          <span className="ml-[4px] h-[16px] w-px bg-[#3f6f86]" />
        </div>
        <div className="flex w-[16px] flex-col bg-white">
          <div className="flex flex-1 items-center justify-center border border-[#aaa] bg-[#eee]">
            <svg width="5" height="3" viewBox="0 0 5 3"><path d="M0 3L2.500 0 5 3z" /></svg>
          </div>
          <div className="flex flex-1 items-center justify-center border border-[#aaa] bg-[#eee]">
            <svg width="5" height="3" viewBox="0 0 5 3"><path d="M0 0h5L2.500 3z" /></svg>
          </div>
        </div>
      </div>
    </div>
  </div>
);

const Arrow = ({ x, y, dir }: { x: number; y: number; dir: number }) => (
  <path d="M0 0L-40 -10V10z" fill="#fff" transform={`translate(${x} ${y}) rotate(${dir})`} />
);

const RingDrawing = () => (
  <svg width="1604" height="889" viewBox="308 143 1604 889" className="absolute inset-0">
    <defs>
      <linearGradient id="shank" gradientUnits="userSpaceOnUse" x1="0" y1="257" x2="0" y2="856">
        <stop offset="0" stopColor="#dba018" />
        <stop offset=".1" stopColor="#e5a71b" />
        <stop offset=".2" stopColor="#fab926" />
        <stop offset=".245" stopColor="#ffd63c" />
        <stop offset=".27" stopColor="#ffff70" />
        <stop offset=".31" stopColor="#ffff86" />
        <stop offset=".335" stopColor="#ffff74" />
        <stop offset=".375" stopColor="#ffcb35" />
        <stop offset=".42" stopColor="#e9a91d" />
        <stop offset=".5" stopColor="#c18d14" />
        <stop offset=".6" stopColor="#86630e" />
        <stop offset=".68" stopColor="#4e3907" />
        <stop offset=".745" stopColor="#241902" />
        <stop offset=".795" stopColor="#211702" />
        <stop offset=".83" stopColor="#4b3608" />
        <stop offset=".9" stopColor="#a97d17" />
        <stop offset=".96" stopColor="#e2a524" />
        <stop offset="1" stopColor="#fdb92e" />
      </linearGradient>
      <linearGradient id="head" x1="0" y1="0" x2="0" y2="1">
        <stop offset="0" stopColor="#86640f" />
        <stop offset=".3" stopColor="#bd8b15" />
        <stop offset=".75" stopColor="#eeaa1e" />
        <stop offset="1" stopColor="#f8b424" />
      </linearGradient>
      <linearGradient id="rod" x1="0" y1="0" x2="0" y2="1">
        <stop offset="0" stopColor="#7c5a0c" />
        <stop offset=".12" stopColor="#b98616" />
        <stop offset=".28" stopColor="#eba81e" />
        <stop offset=".34" stopColor="#ffd235" />
        <stop offset=".39" stopColor="#ffff6a" />
        <stop offset=".44" stopColor="#ffff6a" />
        <stop offset=".5" stopColor="#f3b525" />
        <stop offset=".68" stopColor="#b98617" />
        <stop offset=".85" stopColor="#6b4d0c" />
        <stop offset=".96" stopColor="#1d1402" />
        <stop offset="1" stopColor="#000" />
      </linearGradient>
      <linearGradient id="prong" x1="0" y1="0" x2="0" y2="1">
        <stop offset="0" stopColor="#a87c12" />
        <stop offset=".4" stopColor="#ffe24a" />
        <stop offset=".75" stopColor="#d99d1a" />
        <stop offset="1" stopColor="#6b4c08" />
      </linearGradient>
    </defs>

    {/* setting */}
    <g stroke="#e0a440">
      <rect x="976" y="212.500" width="38" height="14" rx="5" fill="url(#prong)" />
      <rect x="976" y="224.500" width="38" height="15" rx="4" fill="url(#prong)" stroke="#8a6410" />
      <rect x="976" y="239.500" width="38" height="19" rx="6" fill="url(#prong)" stroke="#8a6410" />
      <rect x="977" y="259.500" width="38" height="12" rx="4" fill="url(#prong)" />
    </g>
    <path d="M980 212q-5 2-4 10l-1 8 1 9-1 9 3 10" stroke="#e8b566" strokeWidth="1.500" fill="none" />
    <path d="M984 224l5-13 6-8 15 15v6z" fill="#79a6f2" />
    <path d="M988 223l7-15M997 210l12 8M997 216l10 7" stroke="#223a75" strokeWidth="2" />
    <path d="M984 224l5-13 6-8 15 13M992 223l3-15 3 15" stroke="#a9c8ff" fill="none" strokeWidth="1.500" />
    <path d="M987 268l4-7 6-3 9 10z" fill="#8fb4f2" />
    <path d="M986 266q0-8 8-9t11 3l6 8" stroke="#e9b766" fill="none" strokeWidth="2" />
    <path d="M996 261l6 7M992 268l3-6" stroke="#223a75" strokeWidth="1.800" />

    {/* shank, head and finger rod */}
    <path d="M970.500 268.500H1010.500V257H1051V856H970.500z" fill="url(#shank)" />
    <rect x="1010.500" y="203" width="40.500" height="54" fill="url(#head)" />
    <path d="M971 855.500V268.500H1010.500V203H1051V855.500z" fill="none" stroke="#f6b545" strokeWidth="1.500" />
    <rect x="1051.500" y="407" width="497.500" height="47" fill="url(#rod)" />
    <path d="M1549.500 407v48" stroke="#f4bd68" strokeWidth="2" />

    {/* dimensions */}
    <g stroke="#d9d9d9" strokeWidth="1.600">
      <path d="M1052 332.500H1549M1549.500 313V397.500" />
      <path d="M1559 407.500H1666M1559 451.500H1666" />
      <path d="M1646 347V370M1646 490V512" />
      <path d="M971 862V1014M1051 856V1014" />
      <path d="M911 994H932M1090 994H1111" />
    </g>
    <Arrow x={1051} y={332.500} dir={180} />
    <Arrow x={1549} y={332.500} dir={0} />
    <Arrow x={1646} y={407} dir={90} />
    <Arrow x={1646} y={452} dir={-90} />
    <Arrow x={971} y={994} dir={0} />
    <Arrow x={1051} y={994} dir={180} />
    <g fill="#fff" stroke="#fff" strokeWidth=".5" fontFamily="Liberation Sans, sans-serif" fontSize="55">
      <text x="1236" y="323" textLength="137">12.46</text>
      <text x="958" y="984">2.00</text>
      <text transform="translate(1636 477.500) rotate(-90)" textLength="105">1.10</text>
    </g>

    {/* world axes */}
    <path d="M345 965V995" stroke="#a58b55" strokeWidth="1.500" />
    <path d="M345 995H375" stroke="#3c7a78" strokeWidth="1.500" />
    <g fontFamily="DejaVu Sans, sans-serif" fontSize="12">
      <text x="347.500" y="967" fill="#d8bf9c">z</text>
      <text x="377" y="997" fill="#6fb0b8">y</text>
    </g>

    {/* orientation glyph */}
    <g fill="none" strokeWidth="1.500">
      <path d="M1860 157l5-3h10l3 3-3 4h-10zM1860 157h18M1872 154v7" stroke="#41579c" />
      <path d="M1871 161l-7 6 3 17 1 17 3 3 3-3 1-17 3-17-7-6M1865 170h13M1867 184h8M1868 200h6" stroke="#dba368" />
    </g>
  </svg>
);

const Workspace = () => (
  <main className="flex flex-1 flex-col border-t border-l-2 border-white bg-[#b0b4b5] pt-[5px] pr-[8px] pb-[8px] pl-[6px]">
    <div className="flex h-[93px] shrink-0 flex-col bg-[#afd7e5] pt-[4px]">
      <CommandArea />
      <div className={`${SEGOE} mt-[5px] flex text-[12px] text-[#16242b]`}>
        <ViewTab label="Perspective" width={78} box="w-[78px]" fill="#d9e7ea" text="pl-[11px] tracking-[-0.3px]" />
        <ViewTab label="Through Finger" width={99} box="w-[99px]" fill="#d9e7ea" text="pl-[11px] tracking-[-0.25px]" />
        <div className="relative -ml-[8px] h-[19px] w-[76px]">
          <svg width="76" height="19" viewBox="0 0 76 19" className="absolute inset-0">
            <path d="M0 19Q5 16 8 10Q13 .5 18 .5H72Q75.500 .5 75.500 4V19z" fill="#3db3dc" stroke="#2a5668" />
          </svg>
          <span className="relative block pl-[19px] leading-[17px] tracking-[-0.3px] text-[#12466a]">Side View</span>
        </div>
        <ViewTab label="Looking Down" width={95} box="w-[95px]" fill="#d9e7ea" text="pl-[11px] tracking-[-0.2px]" />
        <div className="relative flex h-[19px] w-[31px] items-center justify-center">
          <svg width="31" height="19" viewBox="0 0 31 19" className="absolute inset-0">
            <path d="M.5 19V8L8 .5H27Q30.500 .5 30.500 4V19" fill="#b5d9e4" stroke="#33464e" />
            <path d="M16.500 5.500h2v3h3v2h-3v3h-2v-3h-3v-2h3z" fill="#e8f1f4" stroke="#3c4c53" />
          </svg>
        </div>
      </div>
    </div>
    <div className="relative flex-1 bg-black">
      <RingDrawing />
      <div className={`${SEGOE} relative flex h-[19px] w-[80px] items-center bg-[#3aaeda] text-[12px] tracking-[-0.3px] text-[#0f3552]`}>
        <span className="flex-1 pl-[9px]">Side View</span>
        <span className="flex h-[15px] w-[11px] items-center justify-center border-l border-[#0d3950]">
          <svg width="7" height="4" viewBox="0 0 7 4"><path d="M0 0h7L3.500 4z" fill="#0b2b45" /></svg>
        </span>
      </div>
    </div>
  </main>
);

const Taskbar = () => (
  <footer className="flex h-[40px] shrink-0 items-center bg-[#1c1c1d] text-white">
    <div className="flex h-full items-center">
      <div className="flex w-[48px] justify-center">
        <svg width="16" height="16" viewBox="0 0 16 16" fill="#fff"><path d="M0 2.200L7 1.200V7.500H0zM8 1.100L16 0V7.500H8zM0 8.500H7V14.800L0 13.800zM8 8.500H16V16L8 14.900z" /></svg>
      </div>
      <div className="flex w-[48px] justify-center">
        <svg width="17" height="17" viewBox="0 0 17 17"><circle cx="8.500" cy="8.500" r="6.700" fill="none" stroke="#fff" strokeWidth="2.200" /></svg>
      </div>
      <div className="flex w-[52px] justify-center">
        <svg width="25" height="25" viewBox="0 0 25 25">
          <defs>
            <linearGradient id="edgeTop" x1="0" y1="0" x2="1" y2="0"><stop offset="0" stopColor="#2aa5e8" /><stop offset="1" stopColor="#5bd56a" /></linearGradient>
          </defs>
          <circle cx="12.500" cy="12.500" r="12" fill="#1670c6" />
          <path d="M.5 12Q2 1 12.500.5 24 1 24.500 10q0 6-6 6.500-4 0-4-1.500 2-2 1-4.500Q14 7 9 7 3 7 .5 12z" fill="url(#edgeTop)" />
          <path d="M9 12q-2 8 6 10 4 1 7-2-4 5-10 4.500Q3 23 5 14q1-3 5-4z" fill="#12489b" />
          <path d="M15 15q-1 4 8 2l1-1q-1 5-6 5-5 0-4-6z" fill="#1c1c1d" />
        </svg>
      </div>
      <div className="flex w-[47px] justify-center">
        <svg width="24" height="24" viewBox="0 0 24 24">
          <path d="M7 5V1.500h10V5" fill="none" stroke="#38a5d8" strokeWidth="2" />
          <path d="M.5 4.500h23V21q0 2.500-2.500 2.500H3Q.5 23.500.5 21z" fill="#f3f3f3" />
          <path d="M7.500 9h4v4h-4z" fill="#e2603a" /><path d="M12.500 9h4v4h-4z" fill="#7cae3a" />
          <path d="M7.500 14h4v4h-4z" fill="#3a97c9" /><path d="M12.500 14h4v4h-4z" fill="#e9b63b" />
        </svg>
      </div>
      <div className="flex w-[51px] justify-center">
        <svg width="25" height="23" viewBox="0 0 25 23">
          <path d="M0 8L12.500 0 25 8v15H0z" fill="#1565a8" />
          <path d="M2 8h21l-10.500 8z" fill="#f2f8fc" />
          <path d="M0 8l12.500 9L25 8v15H0z" fill="#43aee8" />
          <path d="M0 23l12-7 13 7z" fill="#1f88d2" />
        </svg>
      </div>
      <div className="flex w-[46px] justify-center">
        <svg width="25" height="24" viewBox="0 0 25 24">
          <path d="M2 12Q4 4 14 3q8 0 9 7 0 8-8 9-3 0-3 3-6 1-9-2-4-3-1-8z" fill="#d9e6ef" />
          <circle cx="7" cy="11" r="2" fill="#4aa04d" /><circle cx="11" cy="7" r="1.800" fill="#d8553d" /><circle cx="15" cy="7" r="1.500" fill="#e9c03c" />
          <circle cx="8" cy="17" r="2" fill="#3a6ec2" /><circle cx="13" cy="12" r="1.800" fill="#1c1c1d" />
          <path d="M13 23l7-18" stroke="#c48a55" strokeWidth="2.500" /><path d="M18 6l-1-5 4 2 3-2-1 6z" fill="#e5bd95" />
        </svg>
      </div>
      <div className="flex w-[53px] justify-center">
        <svg width="25" height="25" viewBox="0 0 25 25">
          <circle cx="12.500" cy="13" r="12" fill="#6cb944" />
          <circle cx="12.500" cy="13" r="5.500" fill="none" stroke="#fff" strokeWidth="2" />
          <path d="M14 9L14.500 1M16 10l4-8M17 12l7-5" stroke="#fff" strokeWidth="2.600" />
          <path d="M15.500 8l1.500-6M17.500 10l5-6" stroke="#e07a4c" strokeWidth="1.300" />
        </svg>
      </div>
      <div className="flex w-[46px] justify-center">
        <svg width="22" height="19" viewBox="0 0 22 19">
          <path d="M0 0h9l2 2.500h11V18H0z" fill="#e2a63a" />
          <path d="M0 4h22v14H0z" fill="#f9d268" />
          <path d="M4 10h14v9h-4v-4H8v4H4z" fill="#5b95a8" />
        </svg>
      </div>
      <div className="ml-[2px] flex h-full w-[48px] items-center justify-center border-b-2 border-[#e3b3b8] bg-[#474747]">
        <svg width="24" height="24" viewBox="0 0 24 24" fill="none" stroke="#e8fbff" strokeWidth="1.100">
          <circle cx="12" cy="12" r="12" fill="#35afcb" stroke="none" />
          <path d="M2 9l3.500 8L8 9" /><circle cx="16" cy="13.500" r="5.500" /><circle cx="16" cy="5" r="3" /><path d="M8 17h1" />
        </svg>
      </div>
    </div>
    <div className={`${SEGOE} ml-auto flex h-full items-center text-[12px]`}>
      <span className="w-[54px] tracking-[-0.3px] text-[#e4e4e4]">Desktop</span>
      <span className="-mt-[24px] w-[31px] text-[14px]">»</span>
      <svg width="14" height="17" viewBox="0 0 14 17" fill="none" stroke="#f0f0f0" strokeWidth="1.200" className="mr-[42px]">
        <circle cx="10" cy="3.500" r="2.500" /><path d="M6.500 10q0-4 3.500-4t3.500 4" /><circle cx="4" cy="9" r="2.300" /><path d="M.7 16q0-4.500 3.300-4.500T7.500 16" />
      </svg>
      <svg width="24" height="22" viewBox="0 0 24 22" className="mr-[6px]">
        <circle cx="10.500" cy="10.500" r="10" fill="#f4a821" />
        <circle cx="9" cy="8" r="6" fill="#fbc043" />
        <path d="M12 19.500a3.500 3.500 0 0 1 0-6.500 5 5 0 0 1 8.500.5 3 3 0 0 1 .5 6z" fill="#e5eef8" />
      </svg>
      <span className="w-[39px] text-[14px] tracking-[-0.4px]">32°C</span>
      <span className="w-[110px] text-[14px] tracking-[-0.3px] whitespace-nowrap">Nắng nhiều nơi</span>
      <svg width="12" height="8" viewBox="0 0 12 8" fill="none" stroke="#fff" strokeWidth="1.300" className="mr-[10px]"><path d="M.7 7L6 1.200 11.300 7" /></svg>
      <svg width="17" height="15" viewBox="0 0 17 15" fill="none" stroke="#fff" strokeWidth="1.200" className="mr-[7px]">
        <path d="M5.500 1.500H16v9H4.500V7M10 10.500V14M6.500 14h7M.6.600h4v5h-4zM2.600 5.600V14" />
      </svg>
      <svg width="17" height="14" viewBox="0 0 17 14" fill="none" stroke="#fff" strokeWidth="1.200" className="mr-[12px]">
        <path d="M.6 4.500h3L7 1.500v11l-3.400-3H.6zM9.500 4.500q2 2.500 0 5" /><path d="M11.500 2.500q4 4.500 0 9M14 1q4 6 0 12" stroke="#8a8a8a" />
      </svg>
      <svg width="17" height="16" viewBox="0 0 17 16" fill="none" stroke="#fff" strokeWidth="1.300" className="mr-[12px]">
        <path d="M5 12L12 1.500q3 0 2.500 3L8 13l-3.500 1zM7 8Q1 7 1 11q0 4 5 4 5-1 6-4 1-2 4-2" />
      </svg>
      <svg width="23" height="14" viewBox="0 0 23 14" fill="none" stroke="#fff" strokeWidth="1.200" className="mr-[11px]">
        <path d="M.6.600h21.800v12.800H.6z" /><path d="M3 4h17M3 7h17" strokeDasharray="1.500 1.500" /><path d="M5 10.500h13" />
      </svg>
      <div className="mr-[19px] w-[50px] text-center leading-[18px] tracking-[-0.5px] whitespace-nowrap">
        <div>10:44 AM</div>
        <div>7/7/2023</div>
      </div>
      <svg width="25" height="25" viewBox="0 0 25 25" className="mr-[12px]">
        <path d="M0 1h17v12H9l-3 4v-4H0z" fill="#fff" />
        <path d="M3 4.500h11M3 7h11M3 9.500h8" stroke="#222" />
        <circle cx="16.500" cy="16.500" r="7.500" fill="#333" stroke="#999" />
        <text x="13.500" y="20.500" fontSize="11.500" fill="#fff" fontFamily="Open Sans, sans-serif">1</text>
      </svg>
      <div className="mr-[4px] h-full w-px bg-[#5a5a5a]" />
    </div>
  </footer>
);

export default function App() {
  return (
    <div className="flex h-[1080px] w-[1920px] flex-col overflow-hidden bg-[#e8e8e8]">
      <Gradients />
      <header className="flex h-[23px] shrink-0 items-center bg-white">
        <svg width="16" height="16" viewBox="0 0 16 16" className="mr-[5px] ml-[2px]" fill="none">
          <circle cx="8" cy="8" r="8" fill="#36a9c4" />
          <path d="M7 5a3 3 0 1 0 1 5M12 5.500a3 3 0 1 0 0 5M8 4a3 3 0 0 1 4-1" stroke="#a8e4f0" />
        </svg>
        <span className={`${SEGOE} flex-1 text-[12px] tracking-[-0.35px] text-[#8c8c8c]`}>Matrix 8.0 (64-bit) - 6039.3dm</span>
        <svg width="104" height="12" viewBox="0 0 104 12" fill="none" stroke="#8a8a8a" className="mr-[18px] mb-[3px]">
          <path d="M1 6.500h10M46.500 3.500h7v8h-7zM48.500 3.500v-2h7v8h-2M92.500 1l10 10M102.500 1l-10 10" />
        </svg>
      </header>
      <nav className={`${ARIAL} flex h-[21px] shrink-0 items-center bg-[#e8e8e8] pt-px pl-[6px] text-[11px] text-black`}>
        {menuItems.map((m) => (
          <span key={m.label} className={`${m.width} whitespace-nowrap`}>{m.label}</span>
        ))}
      </nav>
      <div className="flex h-[996px] shrink-0">
        <Sidebar />
        <Workspace />
      </div>
      <Taskbar />
    </div>
  );
}
